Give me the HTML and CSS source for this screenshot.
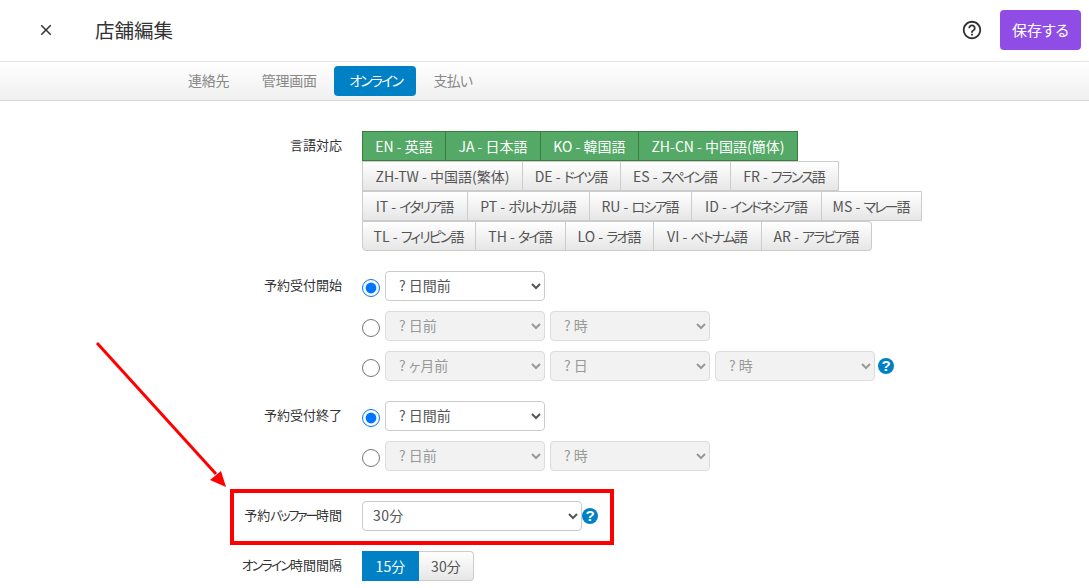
FILE: index.html
```html
<!DOCTYPE html>
<html lang="ja">
<head>
<meta charset="utf-8">
<title>店舗編集</title>
<link rel="stylesheet" href="styles.css">
</head>
<body>
<div class="page">
  <header class="topbar">
    <svg class="close-icon" viewBox="0 0 24 24"><path d="M19 6.41 17.59 5 12 10.59 6.41 5 5 6.41 10.59 12 5 17.59 6.41 19 12 13.41 17.59 19 19 17.59 13.41 12z"/></svg>
    <h1 class="title">店舗編集</h1>
    <svg class="help-outline" viewBox="0 0 24 24"><path d="M11 18h2v-2h-2v2zm1-16C6.48 2 2 6.48 2 12s4.48 10 10 10 10-4.48 10-10S17.52 2 12 2zm0 18c-4.41 0-8-3.59-8-8s3.59-8 8-8 8 3.59 8 8-3.59 8-8 8zm0-14c-2.21 0-4 1.79-4 4h2c0-1.1.9-2 2-2s2 .9 2 2c0 2-3 1.75-3 5h2c0-2.25 3-2.5 3-5 0-2.21-1.79-4-4-4z"/></svg>
    <button class="save">保存する</button>
  </header>
  <nav class="tabs">
    <a class="tab">連絡先</a>
    <a class="tab">管理画面</a>
    <a class="tab active"><span class="k">オンライン</span></a>
    <a class="tab pay">支払い</a>
  </nav>
  <main class="form">
    <div class="row langs">
      <div class="label">言語対応</div>
      <div class="controls">
        <div class="btn-row r1">
          <button class="lang on">EN - 英語</button><button class="lang on">JA - 日本語</button><button class="lang on">KO - 韓国語</button><button class="lang on">ZH-CN - 中国語(簡体)</button>
        </div>
        <div class="btn-row r2">
          <button class="lang">ZH-TW - 中国語(繁体)</button><button class="lang">DE - <span class="k">ドイツ</span>語</button><button class="lang">ES - <span class="k">スペイン</span>語</button><button class="lang">FR - <span class="k">フランス</span>語</button>
        </div>
        <div class="btn-row r3">
          <button class="lang">IT - <span class="k">イタリア</span>語</button><button class="lang">PT - <span class="k">ポルトガル</span>語</button><button class="lang">RU - <span class="k">ロシア</span>語</button><button class="lang">ID - <span class="k">インドネシア</span>語</button><button class="lang">MS - <span class="k">マレー</span>語</button>
        </div>
        <div class="btn-row r4">
          <button class="lang">TL - <span class="k">フィリピン</span>語</button><button class="lang">TH - <span class="k">タイ</span>語</button><button class="lang">LO - <span class="k">ラオ</span>語</button><button class="lang">VI - <span class="k">ベトナム</span>語</button><button class="lang">AR - <span class="k">アラビア</span>語</button>
        </div>
      </div>
    </div>

    <div class="row start">
      <div class="label">予約受付開始</div>
      <div class="controls stack">
        <div class="opt"><input type="radio" name="s" checked><select class="sel"><option>? 日間前</option></select></div>
        <div class="opt"><input type="radio" name="s"><select class="sel" disabled><option>? 日前</option></select><select class="sel" disabled><option>? 時</option></select></div>
        <div class="opt"><input type="radio" name="s"><select class="sel" disabled><option>? ヶ月前</option></select><select class="sel" disabled><option>? 日</option></select><select class="sel" disabled><option>? 時</option></select><span class="help">?</span></div>
      </div>
    </div>

    <div class="row end">
      <div class="label">予約受付終了</div>
      <div class="controls stack">
        <div class="opt"><input type="radio" name="e" checked><select class="sel"><option>? 日間前</option></select></div>
        <div class="opt"><input type="radio" name="e"><select class="sel" disabled><option>? 日前</option></select><select class="sel" disabled><option>? 時</option></select></div>
      </div>
    </div>

    <div class="row buffer">
      <div class="label">予約<span class="k k2">バッファー</span>時間</div>
      <div class="controls inline">
        <select class="sel wide"><option>30分</option></select><span class="help">?</span>
      </div>
    </div>

    <div class="row interval">
      <div class="label"><span class="k">オンライン</span>時間間隔</div>
      <div class="controls inline">
        <button class="seg active">15分</button><button class="seg">30分</button>
      </div>
    </div>
  </main>

  <svg class="annot" viewBox="0 0 1089 588">
    <line x1="97" y1="343" x2="216" y2="474" stroke="#ff0000" stroke-width="3"/>
    <polygon points="226,487 210,480 221,471" fill="#ff0000"/>
  </svg>
  <div class="redbox"></div>
</div>
</body>
</html>
```

FILE: styles.css
```css
* { box-sizing: border-box; }
html, body { margin: 0; padding: 0; background: #fff; }
body {
  font-family: "Noto Sans CJK JP", "Noto Sans", sans-serif;
  font-feature-settings: "palt";
  color: #333;
  font-size: 13px;
}
.page { position: relative; width: 1089px; height: 588px; overflow: hidden; }
.k { letter-spacing: -1.9px; }
.k2 { letter-spacing: -2.2px; }

.topbar {
  display: flex;
  align-items: center;
  height: 62px;
  padding: 0 8px 1px 37px;
  border-bottom: 1px solid #e5e5e5;
}
.close-icon { width: 18px; height: 18px; fill: #333; margin-right: 40px; }
.title { flex: 1; margin: 0; padding-bottom: 2px; font-size: 19.5px; font-weight: 400; color: #333; }
.help-outline { width: 22px; height: 22px; fill: #333; margin-right: 17px; }
.save {
  width: 81px;
  height: 40px;
  padding: 0 0 2px;
  border: 0;
  border-radius: 4px;
  background: #8f4de6;
  color: #fff;
  font: inherit;
  font-size: 15px;
}

.tabs {
  display: flex;
  align-items: center;
  height: 39px;
  padding-left: 173px;
  gap: 2.5px;
  border-bottom: 1px solid #d8d8d8;
  background: linear-gradient(#ffffff, #f0f0f0);
}
.tab {
  height: 30px;
  line-height: 29px;
  padding: 0 15px;
  font-size: 14px;
  letter-spacing: -0.25px;
  color: #888;
  border-radius: 4px;
}
.tab.active { background: #0081c6; color: #fff; padding: 0 14px 0 15px; }
.tab.pay { letter-spacing: -0.8px; }

.form { padding-top: 30px; }
.row { display: flex; }
.label {
  width: 342px;
  flex: none;
  text-align: right;
  font-size: 13px;
  line-height: 28px;
  color: #333;
}
.controls { margin-left: 20px; }
.btn-row { display: grid; height: 30px; }
.r1 { grid-template-columns: 84px 95px 98px 159px; }
.r2 { grid-template-columns: 161px 98px 110px 108px; }
.r3 { grid-template-columns: 106px 122px 102px 130px 100px; }
.r4 { grid-template-columns: 114px 90px 88px 108px 110px; }
.lang {
  height: 30px;
  padding: 0;
  border: 1px solid #ccc;
  border-left-width: 0;
  background: linear-gradient(#fff, #e6e6e6);
  color: #555;
  font: inherit;
  font-size: 14px;
  white-space: nowrap;
}
.lang:first-child { border-left-width: 1px; }
.r4 .lang:first-child { border-bottom-left-radius: 4px; }
.r4 .lang:last-child { border-radius: 0 4px 4px 0; }
.lang.on {
  background: #53a965;
  border-color: #3c7d3f;
  color: #fff;
}
.start { margin-top: 20px; }
.end { margin-top: 20px; }
.buffer { margin-top: 30px; }
.interval { margin-top: 20px; }

.stack { display: flex; flex-direction: column; gap: 10px; }
.opt { display: flex; align-items: center; gap: 5px; }
.opt input {
  width: 18px;
  height: 18px;
  margin: 3px 0 0 0;
  accent-color: #0075ff;
}
.sel {
  width: 160px;
  height: 30px;
  padding: 0 9px 2px;
  border: 1px solid #ccc;
  border-radius: 4px;
  background-color: #fff;
  color: #555;
  font: inherit;
  font-size: 14px;
}
.sel:disabled { background-color: #f2f2f2; color: #999; border-color: #dcdcdc; opacity: 1; }
.sel.wide { width: 220px; padding-left: 6px; letter-spacing: 0.4px; }
.opt .help { margin-left: -2px; }
.help {
  width: 16px;
  height: 16px;
  border-radius: 50%;
  background: #0081c6;
  color: #fff;
  font-family: "Liberation Sans", sans-serif;
  font-size: 15px;
  font-weight: 700;
  line-height: 16px;
  text-align: center;
}
.inline { display: flex; align-items: center; }
.seg {
  height: 30px;
  width: 55px;
  padding: 0;
  border: 1px solid #ccc;
  border-left: 0;
  border-radius: 0 4px 4px 0;
  background: linear-gradient(#fff, #e6e6e6);
  color: #555;
  font: inherit;
  font-size: 14px;
  letter-spacing: 0.2px;
}
.seg.active { width: 57px; background: #0081c6; color: #fff; border: 1px solid #0081c6; border-radius: 0; }

.annot { position: absolute; left: 0; top: 0; width: 1089px; height: 588px; pointer-events: none; }
.redbox {
  position: absolute;
  left: 230px;
  top: 489px;
  width: 384px;
  height: 56px;
  border: 4px solid #ff0000;
}
```
